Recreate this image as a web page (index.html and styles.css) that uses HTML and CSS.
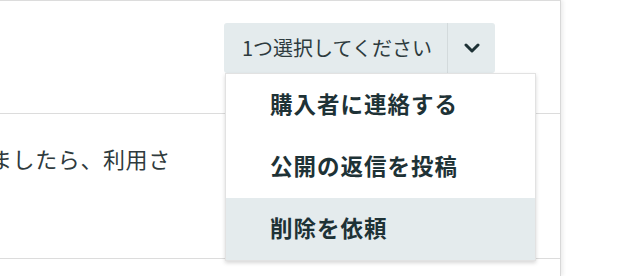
FILE: index.html
```html
<!DOCTYPE html>
<html lang="ja">
<head>
<meta charset="utf-8">
<link rel="stylesheet" href="styles.css">
</head>
<body>
<div class="card">
  <div class="row row-top">
    <div class="select">
      <button class="select-main">1つ選択してください</button>
      <button class="select-toggle" aria-label="開く">
        <svg width="16" height="10" viewBox="0 0 16 10"><polyline points="2,2 8,8 14,2" fill="none" stroke="#1e3236" stroke-width="3" stroke-linecap="round" stroke-linejoin="round"/></svg>
      </button>
      <ul class="menu">
        <li class="menu-item">購入者に連絡する</li>
        <li class="menu-item">公開の返信を投稿</li>
        <li class="menu-item is-active">削除を依頼</li>
      </ul>
    </div>
  </div>
  <div class="row row-body">
    <p class="body-text">ましたら、利用さ</p>
  </div>
  <div class="row row-bottom"></div>
</div>
</body>
</html>
```
FILE: styles.css
```css
html, body {
  margin: 0;
  padding: 0;
  background: #ffffff;
  overflow: hidden;
}
body {
  width: 644px;
  height: 276px;
  font-family: "Noto Sans CJK JP", "Noto Sans", sans-serif;
}
.card {
  width: 580px;
  margin-left: -20px;
  border-top: 1px solid #dcdcdc;
  border-right: 1px solid #d8d8d8;
  box-shadow: 2px 0 4px rgba(0, 0, 0, 0.08);
  background: #fff;
}
.row-top {
  height: 112px;
  border-bottom: 1px solid #dcdcdc;
  display: flex;
  justify-content: flex-end;
  align-items: flex-start;
  padding-right: 65px;
}
.select {
  position: relative;
  display: flex;
  margin-top: 22px;
}
.select button {
  border: 0;
  margin: 0;
  background: #e4ebed;
  font-family: inherit;
  cursor: pointer;
  height: 50px;
}
.select-main {
  width: 223px;
  border-radius: 3px 0 0 3px;
  font-size: 20px;
  color: #2e3b3e;
  padding: 0 0 2px 18px;
  text-align: left;
}
.select-toggle {
  width: 48px;
  border-left: 1px solid #d3dadc !important;
  border-radius: 0 3px 3px 0;
  display: flex;
  align-items: center;
  justify-content: center;
  padding: 0;
}
.menu {
  position: absolute;
  top: 50px;
  left: 1px;
  width: 309px;
  margin: 0;
  padding: 0;
  list-style: none;
  background: #fff;
  border: 1px solid #e2e2e2;
  box-shadow: 0 2px 4px rgba(0, 0, 0, 0.16);
  z-index: 2;
}
.menu-item {
  height: 62px;
  box-sizing: border-box;
  padding-bottom: 4px;
  display: flex;
  align-items: center;
  padding-left: 44px;
  font-size: 22.5px;
  font-weight: 700;
  letter-spacing: 1px;
  color: #1e3236;
}
.menu-item.is-active {
  background: #e4ebed;
}
.row-body {
  height: 144px;
  border-bottom: 1px solid #dcdcdc;
  display: flex;
  align-items: flex-start;
}
.body-text {
  margin: 0;
  padding-top: 28px;
  padding-left: 15px;
  font-size: 22px;
  color: #2f3a3d;
  letter-spacing: 0.6px;
  text-indent: -5px;
}
.row-bottom {
  height: 17px;
}
```
